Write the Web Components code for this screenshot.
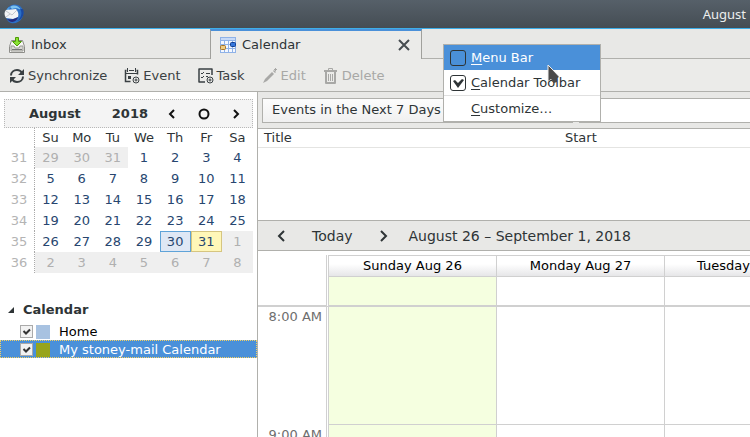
<!DOCTYPE html>
<html lang="en">
<head>
<meta charset="utf-8">
<title>Calendar</title>
<style>
  html, body { height: 100%; margin: 0; }
  body {
    overflow: hidden;
    font: 13px/18px "DejaVu Sans", "Noto Sans", sans-serif;
    color: #2e3436;
    background: #fff;
  }
</style>
</head>
<body>
<mail-app></mail-app>

<script>
"use strict";

const RESET = `
  *, *::before, *::after { box-sizing: border-box; }
  button, input, select { font: inherit; color: inherit; margin: 0; }
  button { background: none; border: 0; padding: 0; }
  svg { display: block; flex: none; }
`;

const ICONS = {
  app: `<svg width="20" height="20" viewBox="0 0 20 20">
    <path d="M2 8C3 2 9-1 14 1c5 2 7 8 4 13-2 4-7 6-11 5-3-1-5-4-5-7z" fill="#2b6fc6"/>
    <path d="M6 3c4-3 9-1 11 3-3-2-6-2-9-1z" fill="#7cc3f2"/>
    <path d="M2 8c0-3 2-5 4-5L5 6z" fill="#4d9de2"/>
    <path d="M16 5c3 4 1 9-3 12 5-1 8-7 6-12z" fill="#1a4aa3"/>
    <path d="M2 6l10-1c2 2 3 5 2 8l-5 2-7-1C0 11 0 8 2 6z" fill="#f3f4f6"/>
    <path d="M2 7l6 4 5-5M2 13l4-3" fill="none" stroke="#c2c6cd"/>
    <path d="M3 15c4 1 8 0 11-2-1 5-7 7-11 2z" fill="#262a7c"/>
  </svg>`,
  inbox: `<svg width="16" height="16" viewBox="0 0 16 16">
    <path d="M2.500 3.500h11l2 6v6H.5v-6z" fill="#f6f6f3" stroke="#8d8d89"/>
    <path d="M2 9h3l1 2h4l1-2h3v5H2z" fill="#d9d9d4" stroke="#9a9a96"/>
    <path d="M3 12.500h10" stroke="#777"/>
    <path d="M6.500.5h3v4h3L8 9 3.500 4.500h3z" fill="#8ae234" stroke="#4e9a06"/>
  </svg>`,
  calendar: `<svg width="16" height="16" viewBox="0 0 16 16">
    <path d="M0 0h16v16H0z" fill="#8fb2e7"/>
    <path d="M1 1h3v2H1zm4 0h3v2H5zm4 0h3v2H9zm4 0h2v2h-2zM1 4h3v3H1zm4 0h3v3H5zm4 0h3v3H9zm4 0h2v3h-2zM1 8h3v3H1zm4 0h3v3H5zm4 0h3v3H9zm4 0h2v3h-2zM1 12h3v3H1zm4 0h3v3H5zm4 0h3v3H9zm4 0h2v3h-2z" fill="#f4f8ff"/>
    <path d="M1 1h14v2H1z" fill="#c7daf7"/>
    <rect x="10.500" y="5.500" width="5" height="4" rx="1" fill="#3476dc" stroke="#123f91"/>
    <rect x=".5" y="8.500" width="5" height="4" rx="1" fill="#efcc84" stroke="#a87422"/>
  </svg>`,
  sync: `<svg width="16" height="16" viewBox="0 0 16 16" fill="none" stroke="currentColor" stroke-width="2">
    <path d="M2 7.500C2 4 5 2 8 2c2 0 4 1 5 3M14 8.500C14 12 11 14 8 14c-2 0-4-1-5-3"/>
    <path d="M15 1v6H9zM1 15V9h6z" fill="currentColor" stroke="none"/>
  </svg>`,
  event: `<svg width="16" height="16" viewBox="0 0 16 16" fill="none" stroke="currentColor">
    <path d="M3.500 0v4M11.500 0v4M5 2.500h5"/>
    <path d="M2.500 2.500h-1v11h5M12.500 2.500h1v4" stroke-width="1.500"/>
    <path d="M1 5.500h13"/>
    <path d="M4 8h3v3H4z" fill="currentColor" stroke="none"/>
    <circle cx="12" cy="12" r="3"/><path d="M10.500 12h3M12 10.500v3"/>
  </svg>`,
  task: `<svg width="16" height="16" viewBox="0 0 16 16" fill="none" stroke="currentColor">
    <path d="M7 14H1V1h13v6" stroke-width="1.500" stroke-linejoin="round"/>
    <path d="M3 5l1 1 2-2M3 9l1 1 2-2M8 5.500h4M8 8.500h2"/>
    <circle cx="12" cy="12" r="3"/><path d="M10.500 12h3M12 10.500v3"/>
  </svg>`,
  edit: `<svg width="16" height="16" viewBox="0 0 16 16" fill="currentColor">
    <path d="M3 11l7-7 2 2-7 7-4 2z"/>
    <path d="M11 3l1-1 2 2-1 1zM13 0h1v1h1v1h-1v1h-1V2h-1V1h1z"/>
  </svg>`,
  trash: `<svg width="16" height="16" viewBox="0 0 16 16" fill="none" stroke="currentColor">
    <path d="M1 3h13" stroke-width="2"/><path d="M5.500 2V.5h4V2"/>
    <path d="M3 4v11h9V4" stroke-width="2" stroke-linejoin="round"/>
    <path d="M5.500 6v7M7.500 6v7M9.500 6v7"/>
  </svg>`,
  close: `<svg width="12" height="12" viewBox="0 0 12 12"><path d="M1 1l10 10M11 1L1 11" stroke="#464c50" stroke-width="2"/></svg>`,
  prev: `<svg width="12" height="14" viewBox="0 0 12 14"><path d="M8 2L3 7l5 5" fill="none" stroke="currentColor" stroke-width="2"/></svg>`,
  next: `<svg width="12" height="14" viewBox="0 0 12 14"><path d="M4 2l5 5-5 5" fill="none" stroke="currentColor" stroke-width="2"/></svg>`,
};

class AppIcon extends HTMLElement {
  connectedCallback() {
    this.attachShadow({ mode: "open" }).innerHTML = `
<style>
${RESET}
:host { display: block; flex: none; }
</style>
${ICONS[this.getAttribute("name")]}`;
  }
}

customElements.define("app-icon", AppIcon);

//===================================================

class TitleBar extends HTMLElement {
  constructor() {
    super();
    this.attachShadow({ mode: "open" }).innerHTML = `
<style>
${RESET}
:host {
  display: flex;
  flex: none;
  align-items: center;
  justify-content: space-between;
  height: 29px;
  padding: 0 4px;
  box-sizing: border-box;
  color: #eceeee;
  font-family: "Noto Sans", sans-serif;
  background: linear-gradient(#566069, #454d54);
  border-bottom: 1px solid #3daee9;
}
</style>
<app-icon name="app"></app-icon>
<slot></slot>`;
  }
}

customElements.define("title-bar", TitleBar);

//===================================================

class TabItem extends HTMLElement {
  connectedCallback() {
    const active = this.hasAttribute("active");
    this.attachShadow({ mode: "open" }).innerHTML = `
<style>
${RESET}
:host {
  display: flex;
  align-items: center;
  width: 210px;
  height: 30px;
  padding: 2px 12px 0 9px;
  box-sizing: border-box;
  border-bottom: 1px solid #b0b0ac;
}
:host([active]) {
  width: 212px;
  border: 1px solid #a0a09c;
  border-top: 2px solid #4a90d9;
  border-bottom: 0;
  padding: 0 11px 0 9px;
  background: #ebebe9;
}
.tab {
  display: flex;
  flex: 1;
  align-items: center;
  gap: 6px;
}
</style>
<button class="tab" role="tab" aria-selected="${active}">
  <app-icon name="${this.getAttribute("icon")}"></app-icon><slot></slot>
</button>
${active ? `<button aria-label="Close tab"><app-icon name="close"></app-icon></button>` : ""}`;
  }
}

customElements.define("tab-item", TabItem);

//===================================================

class TabStrip extends HTMLElement {
  constructor() {
    super();
    this.attachShadow({ mode: "open" }).innerHTML = `
<style>
:host { display: flex; flex: none; background: #e8e8e6; }
.rest { flex: 1; border-bottom: 1px solid #b0b0ac; }
</style>
<slot></slot><div class="rest"></div>`;
  }
}

customElements.define("tab-strip", TabStrip);

//===================================================

class ToolButton extends HTMLElement {
  connectedCallback() {
    const disabled = this.hasAttribute("disabled") ? "disabled" : "";
    this.attachShadow({ mode: "open" }).innerHTML = `
<style>
${RESET}
:host { display: block; }
button { display: flex; align-items: center; gap: 3px; color: #3a4043; }
button:disabled { color: #a8a8a6; }
</style>
<button ${disabled}><app-icon name="${this.getAttribute("icon")}"></app-icon><slot></slot></button>`;
  }
}

customElements.define("tool-button", ToolButton);

class ToolBar extends HTMLElement {
  constructor() {
    super();
    this.attachShadow({ mode: "open" }).innerHTML = `
<style>
:host {
  display: flex;
  flex: none;
  align-items: center;
  gap: 17px;
  height: 33px;
  padding: 1px 0 0 9px;
  box-sizing: border-box;
  background: #ebebe9;
  border-bottom: 1px solid #b0b0ac;
}
</style>
<slot></slot>`;
  }
}

customElements.define("tool-bar", ToolBar);

//===================================================

class MiniMonth extends HTMLElement {
  constructor() {
    super();
    const weeks = [31, 32, 33, 34, 35, 36];
    const days = ["Su", "Mo", "Tu", "We", "Th", "Fr", "Sa"];
    const rows = weeks.map((week, w) => {
      const cells = days.map((_, d) => {
        // the grid opens on July 29
        const n = w * 7 + d - 2;
        if (n < 1) return `<td class="other">${n + 31}</td>`;
        if (n > 31) return `<td class="other">${n - 31}</td>`;
        const cls = n === 30 ? "selected" : n === 31 ? "today" : "";
        return `<td class="${cls}">${n}</td>`;
      });
      return `<tr><th scope="row">${week}</th>${cells.join("")}</tr>`;
    });

    this.attachShadow({ mode: "open" }).innerHTML = `
<style>
${RESET}
:host { display: block; margin: 7px 4px 0; }
header {
  display: flex;
  align-items: center;
  height: 29px;
  padding: 0 10px 0 24px;
  font-weight: bold;
  background: #f4f4f4;
  border: 1px dotted #b8b8b8;
}
.year { margin: 0 18px 0 auto; }
nav { display: flex; align-items: center; gap: 20px; color: #111; }
table {
  width: 100%;
  table-layout: fixed;
  border-collapse: separate;
  border-spacing: 0;
  text-align: center;
}
th { font-weight: normal; padding: 0; }
td { padding: 0; height: 21px; color: #27466f; }
thead th { height: 19px; }
tr > :first-child { width: 31px; border-right: 1px dotted #aaa; color: #b4b4b4; }
.other { background: #efefef; color: #b0b0b0; }
.selected { background: #dfe8f5; border: 1px solid #5fa3d8; }
.today { background: #fff7b8; border: 1px solid #d6c580; }
</style>
<header>
  <span>August</span>
  <span class="year">2018</span>
  <nav>
    <button aria-label="Previous month"><svg width="12" height="12" viewBox="0 0 12 12"><path d="M8 2L4 6l4 4" fill="none" stroke="currentColor" stroke-width="2"/></svg></button>
    <button aria-label="Today"><svg width="12" height="12" viewBox="0 0 12 12"><circle cx="6" cy="6" r="4.500" fill="none" stroke="currentColor" stroke-width="2"/></svg></button>
    <button aria-label="Next month"><svg width="12" height="12" viewBox="0 0 12 12"><path d="M4 2l4 4-4 4" fill="none" stroke="currentColor" stroke-width="2"/></svg></button>
  </nav>
</header>
<table>
  <thead><tr><th></th>${days.map((d) => `<th scope="col">${d}</th>`).join("")}</tr></thead>
  <tbody>${rows.join("")}</tbody>
</table>`;
  }
}

customElements.define("mini-month", MiniMonth);

//===================================================

class CalendarEntry extends HTMLElement {
  connectedCallback() {
    this.attachShadow({ mode: "open" }).innerHTML = `
<style>
${RESET}
:host { display: block; color: #000; }
label {
  display: flex;
  align-items: center;
  height: 18px;
  padding: 1px 0 0 19px;
  border: 1px dotted transparent;
}
:host([selected]) label { color: #fff; background: #4a90d9; border-color: #f5d060; }
input {
  appearance: none;
  width: 13px;
  height: 13px;
  border: 1px solid #aaa;
  background: #f2f2f2 url("data:image/svg+xml,%3Csvg xmlns='http://www.w3.org/2000/svg' viewBox='0 0 11 11'%3E%3Cpath d='M2.500 5l2.500 2.500L9 3.500' fill='none' stroke='%23333' stroke-width='2'/%3E%3C/svg%3E");
}
.swatch { width: 14px; height: 14px; margin: 0 9px 0 3px; background: ${this.getAttribute("color")}; }
</style>
<label><input type="checkbox" checked><span class="swatch"></span><slot></slot></label>`;
  }
}

customElements.define("calendar-entry", CalendarEntry);

class CalendarList extends HTMLElement {
  constructor() {
    super();
    this.attachShadow({ mode: "open" }).innerHTML = `
<style>
${RESET}
:host { display: block; margin-top: 25px; }
button { display: flex; align-items: center; gap: 9px; height: 24px; padding-left: 8px; font-weight: bold; }
</style>
<button aria-expanded="true">
  <svg width="6" height="6" viewBox="0 0 6 6"><path d="M6 0v6H0z" fill="#2e3436"/></svg>Calendar
</button>
<slot></slot>`;
  }
}

customElements.define("calendar-list", CalendarList);

//===================================================

class EventFinder extends HTMLElement {
  constructor() {
    super();
    this.attachShadow({ mode: "open" }).innerHTML = `
<style>
${RESET}
:host { display: block; flex: none; }
form {
  display: flex;
  align-items: center;
  gap: 6px;
  height: 37px;
  padding: 0 0 0 4px;
  background: #e8e8e6;
  border-bottom: 1px solid #b0b0ac;
}
select, input { height: 25px; border: 1px solid #b0b0ac; }
select { appearance: none; width: 311px; padding: 0 9px; background: linear-gradient(#fcfcfc, #f0f0f0); }
input { flex: 1; min-width: 0; padding: 0 6px; background: #fff; border-right: 0; }
table { width: 100%; table-layout: fixed; border-collapse: collapse; }
th {
  height: 18px;
  padding: 0 6px;
  font-weight: normal;
  text-align: left;
  border-bottom: 1px solid #e4e4e2;
}
.title { width: 301px; }
.list { height: 92px; border-bottom: 1px solid #b0b0ac; }
</style>
<form>
  <select aria-label="Filter events"><option>Events in the Next 7 Days</option></select>
  <input type="search" aria-label="Search events">
</form>
<div class="list">
  <table><thead><tr><th class="title">Title</th><th>Start</th></tr></thead></table>
</div>`;
  }
}

customElements.define("event-finder", EventFinder);

//===================================================

class ViewNav extends HTMLElement {
  constructor() {
    super();
    this.attachShadow({ mode: "open" }).innerHTML = `
<style>
${RESET}
:host {
  display: flex;
  flex: none;
  align-items: center;
  height: 30px;
  padding-left: 18px;
  box-sizing: border-box;
  font-size: 14px;
  background: #e8e8e6;
  border-bottom: 1px solid #b0b0ac;
}
.today { margin: 0 24px; }
.range { margin-left: 20px; white-space: nowrap; }
</style>
<button aria-label="Previous week"><app-icon name="prev"></app-icon></button>
<button class="today">Today</button>
<button aria-label="Next week"><app-icon name="next"></app-icon></button>
<span class="range"><slot></slot></span>`;
  }
}

customElements.define("view-nav", ViewNav);

//===================================================

class WeekView extends HTMLElement {
  constructor() {
    super();
    const days = [
      "Sunday Aug 26", "Monday Aug 27", "Tuesday Aug 28", "Wednesday Aug 29",
      "Thursday Aug 30", "Friday Aug 31", "Saturday Sep 1",
    ];
    const cells = (cls) => days.map(() => `<div class="${cls}"></div>`).join("");
    const hours = ["8:00 AM", "9:00 AM"].map(
      (h) => `<div class="row"><div class="time">${h}</div>${cells("hour")}</div>`
    );

    this.attachShadow({ mode: "open" }).innerHTML = `
<style>
${RESET}
:host {
  display: block;
  flex: 1;
  min-height: 0;
  padding-top: 4px;
  overflow: auto;
  scrollbar-width: none;
}
.row {
  display: grid;
  grid-template-columns: 71px repeat(7, minmax(168px, 1fr));
}
.row > :not(:first-child) { border-right: 1px solid #d0d0d0; }
.head { height: 22px; }
.head > :not(:first-child) {
  color: #000;
  text-align: center;
  white-space: nowrap;
  line-height: 20px;
  background: linear-gradient(#fff 40%, #e6e6e8);
  border-top: 1px solid #d0d0d0;
  border-bottom: 1px solid #d0d0d0;
}
.allday > * { height: 30px; border-bottom: 2px solid #d0d0d0; }
.hour { height: 118px; border-bottom: 1px solid #d0d0d0; }
.row:not(.head) > :nth-child(2) { background: #f5ffe0; }
/* double rule between the time column and the days */
.row > :first-child {
  padding: 1px 4px 0 0;
  text-align: right;
  color: #6e6e6e;
  border-right: 3px double #d0d0d0;
}
</style>
<div class="row head"><div></div>${days.map((d) => `<div>${d}</div>`).join("")}</div>
<div class="row allday"><div></div>${cells("")}</div>
${hours.join("")}`;
  }
}

customElements.define("week-view", WeekView);

//===================================================

class ContextMenu extends HTMLElement {
  constructor() {
    super();
    this.attachShadow({ mode: "open" }).innerHTML = `
<style>
${RESET}
:host {
  position: absolute;
  top: 44px;
  left: 443px;
  width: 158px;
  box-sizing: border-box;
  background: #fff;
  border: 1px solid #b0b0ac;
}
label, button {
  display: flex;
  align-items: center;
  gap: 5px;
  width: 100%;
  height: 25px;
  padding-left: 6px;
}
button { padding-left: 27px; border-top: 1px solid #e0e0e0; height: 26px; }
.hover { color: #fff; background: #4a90d9; }
input {
  appearance: none;
  width: 16px;
  height: 16px;
  border: 1px solid #2e3436;
  border-radius: 3px;
}
input:checked {
  background: url("data:image/svg+xml,%3Csvg xmlns='http://www.w3.org/2000/svg' viewBox='0 0 14 14'%3E%3Cpath d='M2 5l2-1 3 3 4-4 2 1-6 8z' fill='%232e3436'/%3E%3C/svg%3E");
}
u { text-underline-offset: 2px; }
.pointer { position: absolute; top: 19px; left: 103px; }
</style>
<label class="hover"><input type="checkbox"><span><u>M</u>enu Bar</span></label>
<label><input type="checkbox" checked><span><u>C</u>alendar Toolbar</span></label>
<button><span><u>C</u>ustomize…</span></button>
<svg class="pointer" width="14" height="20" viewBox="0 0 14 20">
  <path d="M1 1v16l3-2 3 4 3-1v-4l2-1z" fill="#4a4a4a"/>
  <path d="M1 17V1l11 11" fill="none" stroke="#eee"/>
</svg>`;
  }
}

customElements.define("context-menu", ContextMenu);

//===================================================

class MailApp extends HTMLElement {
  constructor() {
    super();
    this.attachShadow({ mode: "open" }).innerHTML = `
<style>
${RESET}
:host { display: flex; flex-direction: column; height: 100%; overflow: hidden; }
.body { display: flex; flex: 1; min-height: 0; }
aside { flex: none; width: 258px; border-right: 1px solid #b0b0ac; }
main { display: flex; flex: 1; flex-direction: column; min-width: 0; }
</style>
<title-bar><span>August</span></title-bar>
<tab-strip>
  <tab-item icon="inbox">Inbox</tab-item>
  <tab-item icon="calendar" active>Calendar</tab-item>
</tab-strip>
<tool-bar>
  <tool-button icon="sync">Synchronize</tool-button>
  <tool-button icon="event">Event</tool-button>
  <tool-button icon="task">Task</tool-button>
  <tool-button icon="edit" disabled>Edit</tool-button>
  <tool-button icon="trash" disabled>Delete</tool-button>
</tool-bar>
<div class="body">
  <aside>
    <mini-month></mini-month>
    <calendar-list>
      <calendar-entry color="#a8c2e1">Home</calendar-entry>
      <calendar-entry color="#97a41c" selected>My stoney-mail Calendar</calendar-entry>
    </calendar-list>
  </aside>
  <main>
    <event-finder></event-finder>
    <view-nav>August 26 – September 1, 2018</view-nav>
    <week-view></week-view>
  </main>
</div>
<context-menu></context-menu>`;
  }
}

customElements.define("mail-app", MailApp);
</script>
</body>
</html>
